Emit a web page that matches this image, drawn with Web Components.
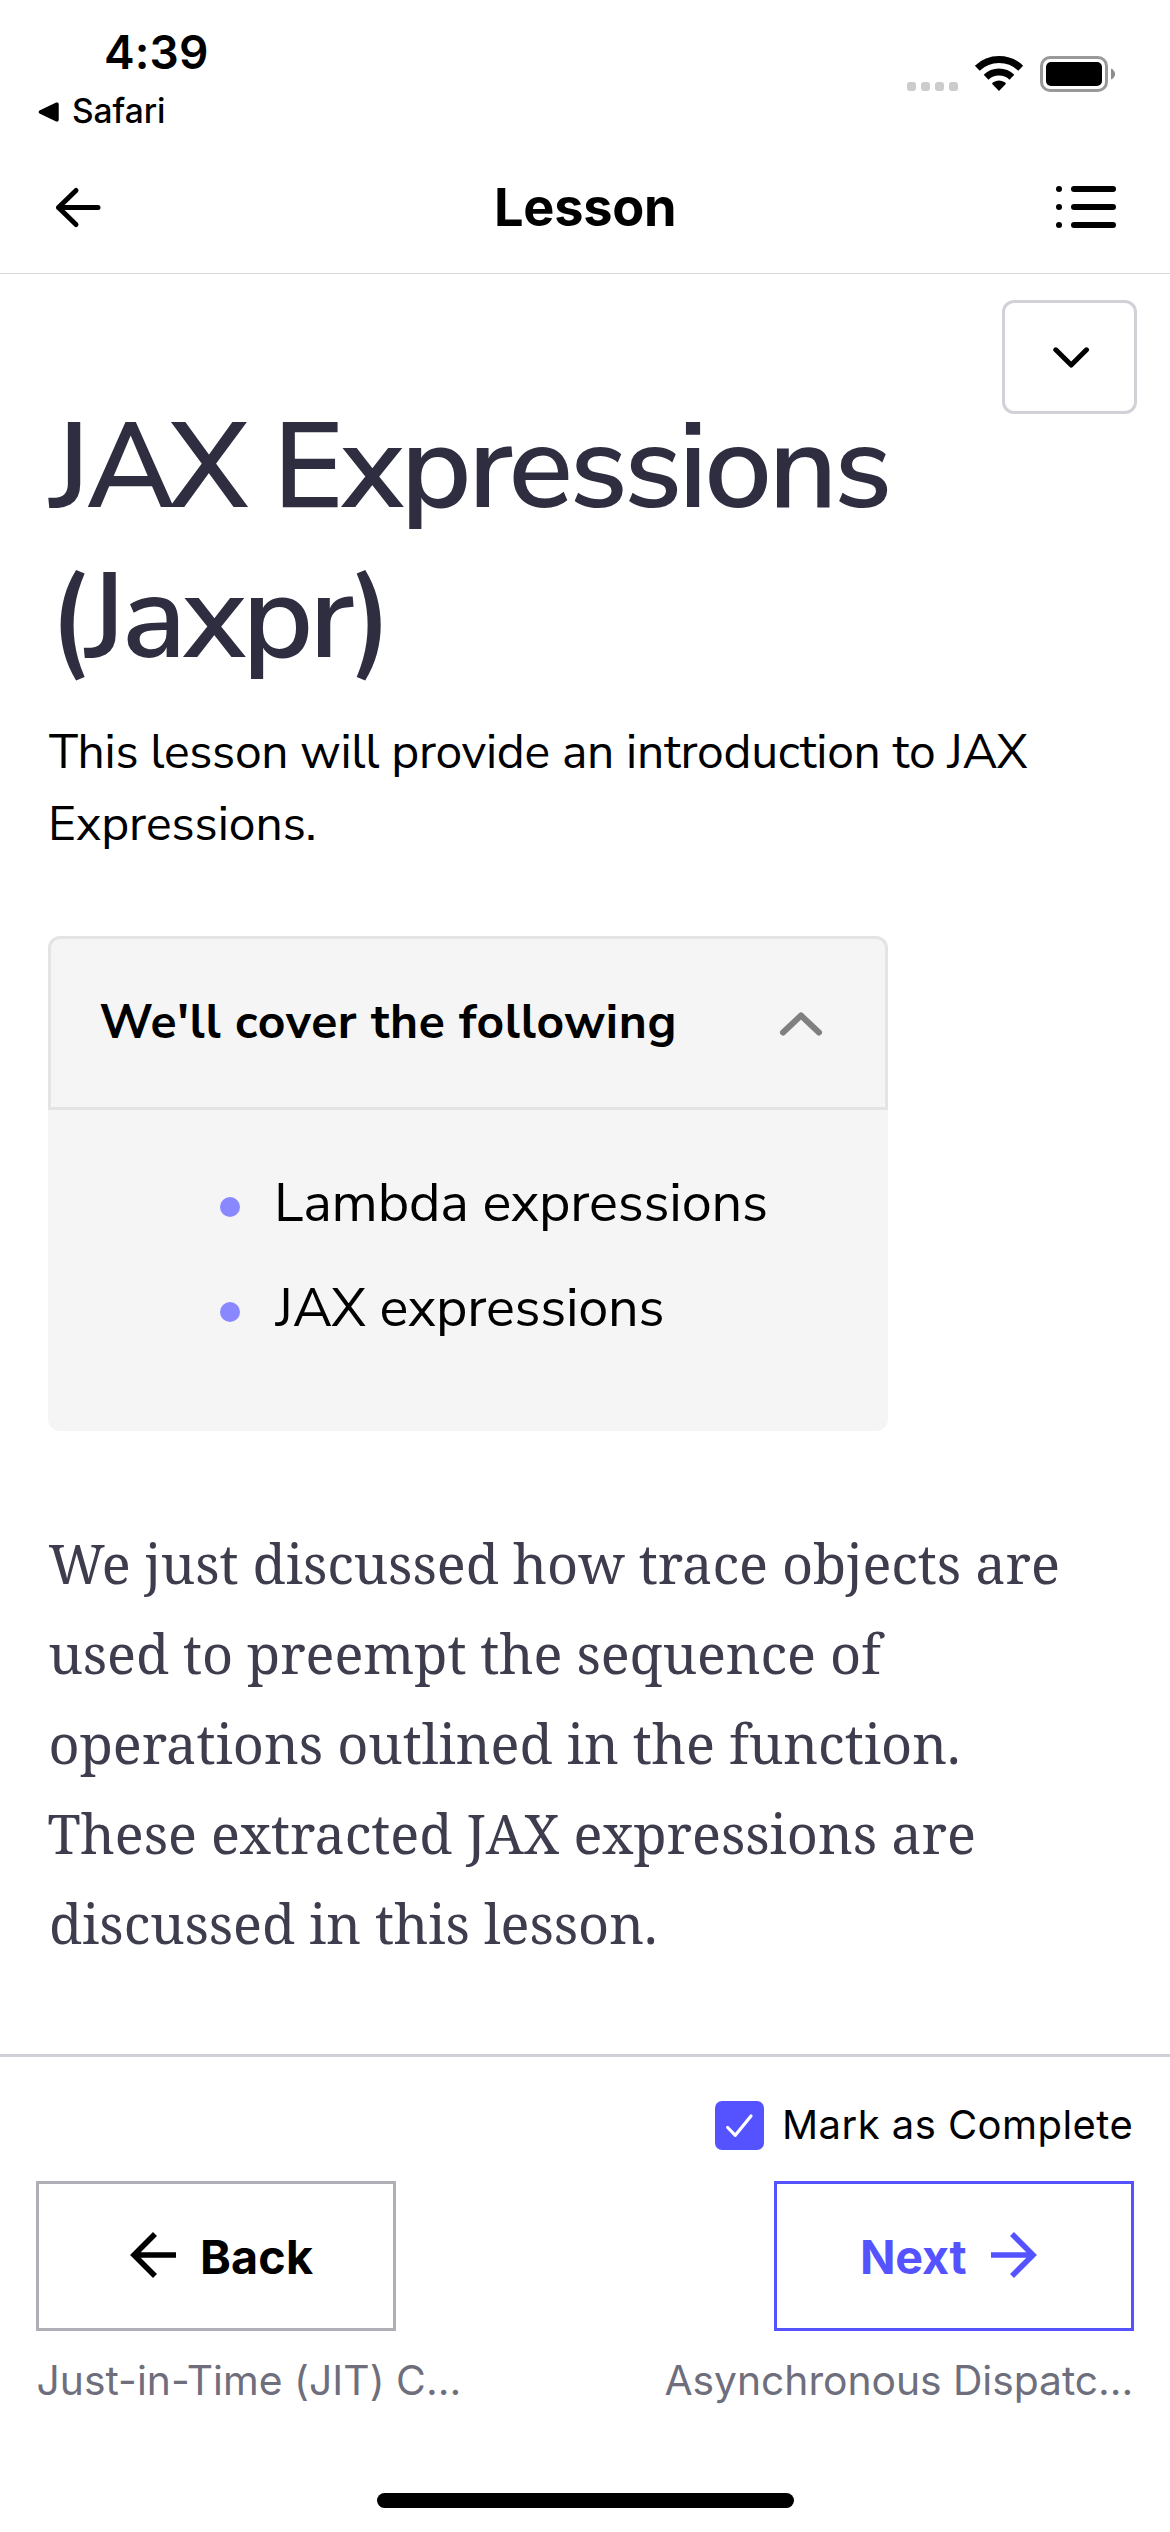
<!DOCTYPE html>
<html lang="en">
<head>
<meta charset="utf-8">
<title>Lesson</title>
<style>
html,body{margin:0;background:#fff}
body{width:1170px;height:2532px;overflow:hidden;font-family:Inter,"Liberation Sans",sans-serif;color:#000}
lesson-app{height:2532px}
</style>
</head>
<body>
<lesson-app></lesson-app>
<script>
const define = (name, html, Base = HTMLElement) => {
  const tpl = document.createElement('template');
  tpl.innerHTML = html;
  customElements.define(name, class extends Base {
    constructor() {
      super();
      this.attachShadow({ mode: 'open' }).append(tpl.content.cloneNode(true));
    }
  });
};

// One line of text. from/to: horizontal extent of the glyphs inside the box;
// base: distance from the top of the box to the baseline.
const pen = document.createElement('canvas').getContext('2d');
class TextLine extends HTMLElement {
  connectedCallback() {
    if (this.shadowRoot) return;
    const root = this.attachShadow({ mode: 'open' });
    root.innerHTML = `<style>:host{display:block;white-space:pre;flex:none}span{display:block}</style><span><slot></slot></span>`;
    const span = root.querySelector('span');
    const cs = getComputedStyle(this);
    const text = this.textContent;
    pen.font = `${cs.fontWeight} ${cs.fontSize} ${cs.fontFamily}`;
    const m = pen.measureText(text);
    const from = +this.getAttribute('from'), to = +this.getAttribute('to'), base = +this.getAttribute('base');
    const gap = (to - from - m.actualBoundingBoxLeft - m.actualBoundingBoxRight) / (text.length - 1);
    span.style.letterSpacing = gap.toFixed(3) + 'px';
    span.style.marginLeft = (from + m.actualBoundingBoxLeft).toFixed(2) + 'px';
    span.style.lineHeight = (2 * base - m.fontBoundingBoxAscent + m.fontBoundingBoxDescent) + 'px';
  }
}
customElements.define('text-line', TextLine);

define('status-bar', `
<style>
:host{display:flex;justify-content:space-between;height:144px}
.left{display:flex;flex-direction:column;width:400px}
.time{height:88px;font-size:46px;font-weight:600}
.app{display:flex;height:56px}
.app svg{margin:13px 0 0 38px}
.app text-line{font-size:33.5px;font-weight:450}
</style>
<div class="left">
  <text-line class="time" from="106" to="207" base="69">4:39</text-line>
  <div class="app">
    <svg width="22" height="22" viewBox="0 0 22 22"><path d="M2.3 10 18.5 2.3Q20 1.7 20 3.4V18.6Q20 20.3 18.5 19.7L2.3 12Q.5 11 2.3 10Z" stroke="#000" stroke-width="1.5" stroke-linejoin="round"/></svg>
    <text-line from="13" to="104" base="35">Safari</text-line>
  </div>
</div>
<svg width="270" height="144" viewBox="900 0 270 144">
  <g fill="#ccc"><rect x="907" y="82" width="9" height="9" rx="3"/><rect x="921" y="82" width="9" height="9" rx="3"/><rect x="935" y="82" width="9" height="9" rx="3"/><rect x="949" y="82" width="9" height="9" rx="3"/></g>
  <g fill="none" stroke="#000">
    <path d="M977.3 68.2A31.5 31.5 0 0 1 1020.7 68.2" stroke-width="7"/>
    <path d="M986.1 77.2A18.9 18.9 0 0 1 1011.9 77.2" stroke-width="7"/>
  </g>
  <path d="M999 91 992.2 84Q992 83 993.2 82.3 999 78.5 1004.8 82.3 1006 83 1005.8 84Z"/>
  <rect x="1041.5" y="57.5" width="65" height="33" rx="8.5" fill="none" stroke="#999" stroke-width="3"/>
  <rect x="1046" y="62" width="56" height="24" rx="5"/>
  <path d="M1111 68.5Q1115 70.5 1115 74T1111 79.5Z" fill="#8c8c8c"/>
</svg>`);

define('nav-bar', `
<style>
:host{display:flex;box-sizing:border-box;height:130px;border-bottom:1px solid #d8d8d8}
text-line{width:770px;font-size:52.3px;font-weight:650}
svg{flex:none;fill:none;stroke:#000;stroke-linecap:round;stroke-linejoin:round}
</style>
<svg width="200" height="129" viewBox="0 144 200 129" stroke-width="5"><path d="M58.5 207.5H98M76 190.5 58.5 207.5 76 224.5"/></svg>
<text-line from="297" to="474" base="82">Lesson</text-line>
<svg width="200" height="129" viewBox="970 144 200 129" stroke-width="6"><path d="M1074 189h39M1074 207h39M1074 225h39M1059 189h.01M1059 207h.01M1059 225h.01"/></svg>`);

define('toggle-button', `
<style>
:host{display:flex;align-items:center;justify-content:center;box-sizing:border-box;width:135px;height:114px;border:3px solid #d1d1d8;border-radius:12px;background:#fff}
</style>
<svg width="40" height="28" viewBox="0 0 40 28" fill="none" stroke="#000" stroke-width="5" stroke-linecap="round" stroke-linejoin="round"><path d="M5.8 6.8 21.2 22 36.5 6.8"/></svg>`);

define('topic-item', `
<style>
:host{display:flex;height:105px;font-size:54px}
i{flex:none;width:20px;height:20px;margin:33px 0 0 172px;border-radius:50%;background:#8a88ff}
</style>
<i></i><slot></slot>`);

define('topic-panel', `
<style>
:host{display:block;box-sizing:border-box;width:840px;height:495px;border-radius:12px;background:#f5f5f5;color:#000}
header{display:flex;box-sizing:border-box;height:174px;border:3px solid #e4e4e4;border-radius:12px 12px 0 0;font-weight:700;font-size:48px}
header text-line{width:710px}
svg{margin-top:62px}
.list{padding-top:54px}
</style>
<header>
  <text-line from="49.5" to="622.5" base="99">We'll cover the following</text-line>
  <svg style="margin-left:16px" width="50" height="50" viewBox="0 0 50 50" fill="none" stroke="#808080" stroke-width="6" stroke-linecap="round" stroke-linejoin="round"><path d="M6 31.5 24 14.5 42 31.5"/></svg>
</header>
<div class="list">
  <topic-item><text-line from="38" to="526" base="57">Lambda expressions</text-line></topic-item>
  <topic-item><text-line from="34.5" to="422.5" base="57">JAX expressions</text-line></topic-item>
</div>`);

define('lesson-article', `
<style>
:host{display:flex;flex-direction:column;box-sizing:border-box;height:1780px;padding-left:48px;font-family:"Nunito Sans",Nunito,Lato,sans-serif}
toggle-button{align-self:flex-end;margin:26px 33px 0 0}
h1,p{margin:0;font-weight:400}
h1{color:#2f2d40;font-size:120px;font-weight:600;height:300px}
h1 text-line{height:150px}
.intro{font-size:48px;height:222px}
.intro text-line{height:72px}
.body{margin-top:91px;font:400 54px "Noto Serif","Droid Serif","Liberation Serif",serif;color:#3d3d4e}
.body text-line{height:90px}
</style>
<toggle-button></toggle-button>
<h1>
  <text-line from="-0.5" to="840" base="93">JAX Expressions</text-line>
  <text-line from="12.5" to="333.5" base="93">(Jaxpr)</text-line>
</h1>
<p class="intro">
  <text-line from="1" to="979.5" base="54">This lesson will provide an introduction to JAX</text-line>
  <text-line from="4" to="265.5" base="54">Expressions.</text-line>
</p>
<topic-panel></topic-panel>
<p class="body">
  <text-line from="0.5" to="1010" base="62">We just discussed how trace objects are</text-line>
  <text-line from="1.5" to="837" base="62">used to preempt the sequence of</text-line>
  <text-line from="2.5" to="910" base="62">operations outlined in the function.</text-line>
  <text-line from="0.5" to="926" base="62">These extracted JAX expressions are</text-line>
  <text-line from="3" to="607" base="62">discussed in this lesson.</text-line>
</p>`);

define('check-box', `
<style>
:host{display:flex;align-items:center;justify-content:center;flex:none;width:49px;height:49px;border-radius:7px;background:#5553ff}
</style>
<svg width="49" height="49" viewBox="0 0 49 49" fill="none" stroke="#fff" stroke-width="3.2" stroke-linecap="round" stroke-linejoin="round"><path d="M12.7 26.5 20.3 34.3 36 15"/></svg>`);

define('step-button', `
<style>
:host{display:flex;box-sizing:border-box;width:360px;height:150px;border:3px solid #b0afb7;font-size:46.7px;font-weight:700}
:host([primary]){border-color:#5553ff;color:#5553ff}
</style>
<slot></slot>`);

define('arrow-icon', `
<style>
:host{display:block;flex:none;width:46px;height:46px;margin-top:48px}
:host([right]) svg{transform:scaleX(-1)}
svg{display:block}
</style>
<svg width="46" height="46" viewBox="0 0 46 46" fill="none" stroke="currentColor" stroke-width="5.6"><path d="M46 23H4M25 2 4 23 25 44"/></svg>`);

define('lesson-footer', `
<style>
:host{display:flex;flex-direction:column;box-sizing:border-box;height:478px;border-top:3px solid #d0d0d6}
.mark{display:flex;height:80px;padding:44px 36px 0 714.5px;font-size:40px}
.mark text-line{margin-top:-5px}
.row{display:flex;justify-content:space-between;padding:0 36px}
.titles{height:162px;font-size:40.8px;color:#6f6e7d}
.titles text-line{width:549px}
.home{align-self:center;width:417px;height:15px;border-radius:8px;background:#000}
</style>
<div class="mark"><check-box></check-box><text-line from="21.5" to="368" base="43">Mark as Complete</text-line></div>
<div class="row">
  <step-button><arrow-icon style="margin-left:91px"></arrow-icon><text-line from="27" to="137" base="90">Back</text-line></step-button>
  <step-button primary><text-line style="width:214px" from="86" to="189.5" base="90">Next</text-line><arrow-icon right></arrow-icon></step-button>
</div>
<div class="row titles">
  <text-line from="1.5" to="422.5" base="64">Just-in-Time (JIT) C...</text-line>
  <text-line from="80.5" to="545.5" base="64">Asynchronous Dispatc...</text-line>
</div>
<div class="home"></div>`);

define('lesson-app', `
<style>:host{display:flex;flex-direction:column;width:1170px}</style>
<status-bar></status-bar>
<nav-bar></nav-bar>
<lesson-article></lesson-article>
<lesson-footer></lesson-footer>`);
</script>
</body>
</html>
